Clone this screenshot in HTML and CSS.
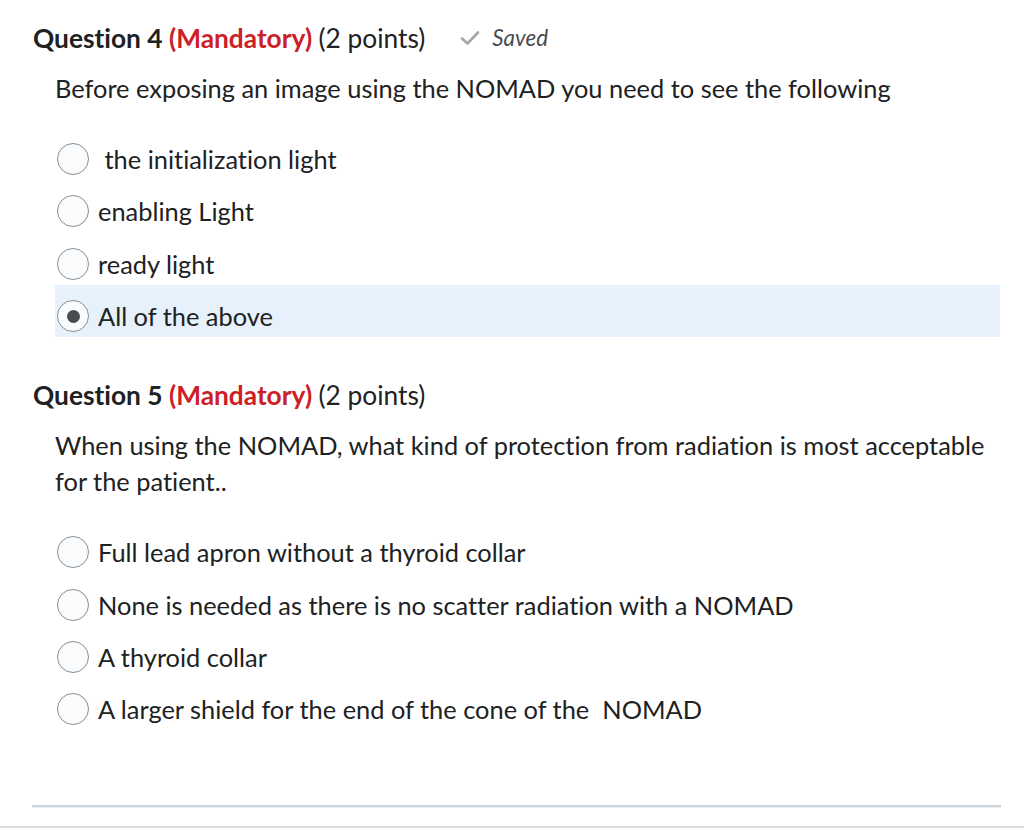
FILE: index.html
```html
<!DOCTYPE html>
<html>
<head>
<meta charset="utf-8">
<link rel="stylesheet" href="styles.css">
</head>
<body>
<div class="page">
  <section class="question q4">
    <h2 class="q-title"><span class="qn">Question 4</span> <span class="mand">(Mandatory)</span> <span class="pts">(2 points)</span><span class="saved"><svg class="check" width="20" height="16" viewBox="0 0 20 16"><path d="M2 8.5 L7.5 13.5 L18 2.5" fill="none" stroke="#a3a8ab" stroke-width="2.6" stroke-linecap="round" stroke-linejoin="round"/></svg><em>Saved</em></span></h2>
    <p class="q-text">Before exposing an image using the NOMAD you need to see the following</p>
    <div class="options">
      <div class="opt"><span class="radio"></span><span class="lbl">&nbsp;the initialization light</span></div>
      <div class="opt"><span class="radio"></span><span class="lbl">enabling Light</span></div>
      <div class="opt"><span class="radio"></span><span class="lbl">ready light</span></div>
      <div class="opt selected"><span class="radio checked"></span><span class="lbl">All of the above</span></div>
    </div>
  </section>

  <section class="question q5">
    <h2 class="q-title"><span class="qn">Question 5</span> <span class="mand">(Mandatory)</span> <span class="pts">(2 points)</span></h2>
    <p class="q-text">When using the NOMAD, what kind of protection from radiation is most acceptable for the patient..</p>
    <div class="options">
      <div class="opt"><span class="radio"></span><span class="lbl">Full lead apron without a thyroid collar</span></div>
      <div class="opt"><span class="radio"></span><span class="lbl">None is needed as there is no scatter radiation with a NOMAD</span></div>
      <div class="opt"><span class="radio"></span><span class="lbl">A thyroid collar</span></div>
      <div class="opt"><span class="radio"></span><span class="lbl">A larger shield for the end of the cone of the &nbsp;NOMAD</span></div>
    </div>
  </section>

  <hr class="divider">
</div>
<div class="bottom-line"></div>
</body>
</html>
```

FILE: styles.css
```css
html, body {
  margin: 0;
  padding: 0;
  background: #ffffff;
}
body {
  font-family: Lato, "Open Sans", sans-serif;
  color: #202122;
  width: 1024px;
  height: 830px;
  overflow: hidden;
  position: relative;
  font-variant-ligatures: no-common-ligatures;
  font-feature-settings: "liga" 0, "clig" 0;
}
.page {
  padding: 20px 24px 0 33px;
}
.question {
  margin: 0;
}
.q-title {
  font-size: 26.3px;
  line-height: 36px;
  font-weight: 700;
  margin: 0;
  display: block;
  white-space: nowrap;
}
.q-title .mand {
  color: #cd2026;
}
.q-title .pts {
  font-weight: 400;
}
.saved {
  display: inline-flex;
  align-items: center;
  vertical-align: top;
  height: 36px;
  margin-left: 35px;
  font-weight: 400;
  font-size: 22.4px;
  color: #494c4e;
}
.saved .check {
  margin-right: 12px;
}
.saved em {
  font-style: italic;
}
.q-text {
  font-size: 25.4px;
  line-height: 36px;
  margin: 14px 0 0 22px;
  max-width: 945px;
}
.options {
  margin: 22px 0 0 22px;
  display: flex;
  flex-direction: column;
}
.q5 .options {
  margin-top: 22px;
}
.opt {
  height: 52.3px;
  box-sizing: border-box;
  padding-top: 10px;
  display: flex;
  align-items: center;
  font-size: 25.4px;
}
.opt.selected {
  background: #e6f1fb;
}
.radio {
  width: 32px;
  height: 32px;
  box-sizing: border-box;
  border: 1.5px solid #8a8f92;
  border-radius: 50%;
  background: #f9fbfd;
  margin-left: 2px;
  margin-right: 9px;
  flex: none;
  display: flex;
  align-items: center;
  justify-content: center;
}
.radio.checked::after {
  content: "";
  width: 13px;
  height: 13px;
  border-radius: 50%;
  background: #494c4e;
}
.lbl {
  line-height: 36px;
}
.q5 {
  margin-top: 40px;
}
.divider {
  border: none;
  height: 2px;
  background: #cdd3d8;
  margin: 75px 0 0 -1px;
  width: 969px;
  box-shadow: 0 1px 0 #e8eef3;
}
.bottom-line {
  position: absolute;
  left: 0;
  right: 0;
  bottom: 2px;
  height: 2px;
  background: #dcdcdc;
}
```
